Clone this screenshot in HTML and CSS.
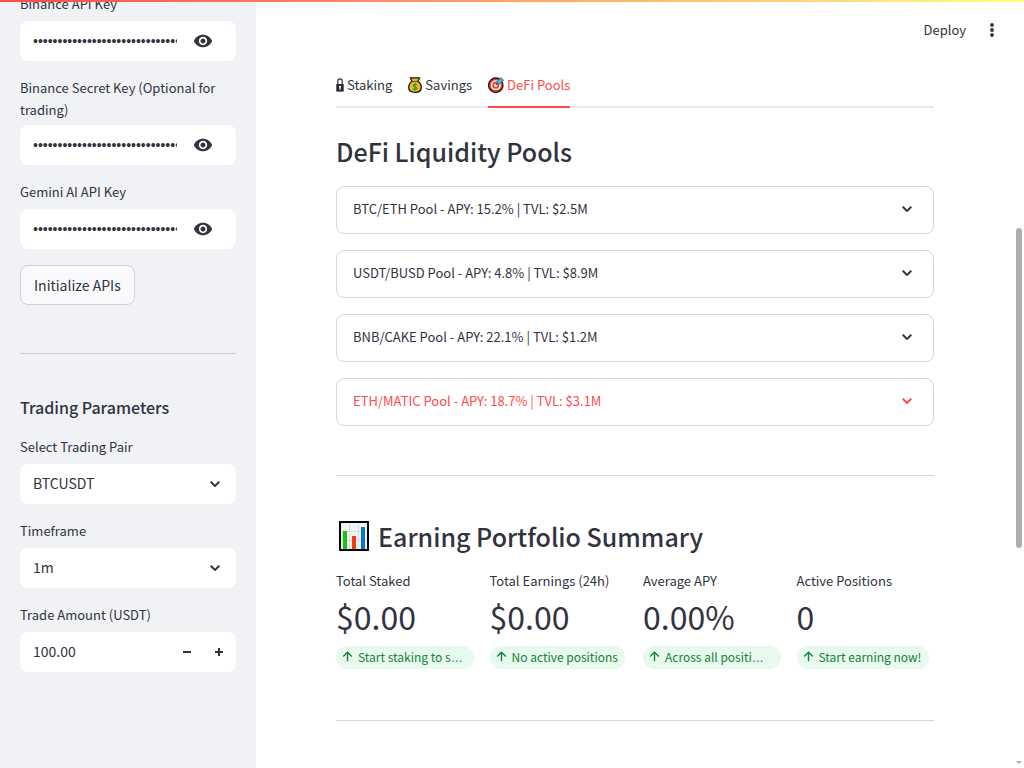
FILE: index.html
```html
<!DOCTYPE html>
<html lang="en">
<head>
<meta charset="utf-8">
<meta name="viewport" content="width=device-width, initial-scale=1">
<title>Earning Portfolio</title>
<link rel="stylesheet" href="styles.css">
</head>
<body>
<svg class="sprite" aria-hidden="true">
  <symbol id="eye" viewBox="0 0 24 24"><path fill="currentColor" d="M12 4.5C7 4.5 2.73 7.61 1 12c1.730 4.390 6 7.500 11 7.500s9.270-3.110 11-7.500c-1.730-4.390-6-7.500-11-7.500zM12 17c-2.760 0-5-2.240-5-5s2.240-5 5-5 5 2.240 5 5-2.240 5-5 5zm0-8c-1.660 0-3 1.340-3 3s1.340 3 3 3 3-1.340 3-3-1.340-3-3-3z"/></symbol>
  <symbol id="chevron" viewBox="0 0 10 6"><path fill="none" stroke="currentColor" stroke-width="1.900" d="M.7.800 5 5 9.300.800"/></symbol>
  <symbol id="arrow" viewBox="0 0 12 12"><path fill="none" stroke="currentColor" stroke-width="1.500" d="M6 11.200V1.500M1.300 6.100 6 1.400l4.700 4.700"/></symbol>
</svg>
<div class="rainbow"></div>
<div class="app">
  <aside class="sidebar">
    <form class="controls">
      <div class="field">
        <label for="api">Binance API Key</label>
        <div class="box"><input id="api" class="secret" type="password" value="0123456789012345678901234567890123456789"><button class="eye" type="button" aria-label="Show API key"><svg><use href="#eye"/></svg></button></div>
      </div>
      <div class="field">
        <label for="secret">Binance Secret Key (Optional for trading)</label>
        <div class="box"><input id="secret" class="secret" type="password" value="0123456789012345678901234567890123456789"><button class="eye" type="button" aria-label="Show secret key"><svg><use href="#eye"/></svg></button></div>
      </div>
      <div class="field">
        <label for="gemini">Gemini AI API Key</label>
        <div class="box"><input id="gemini" class="secret" type="password" value="0123456789012345678901234567890123456789"><button class="eye" type="button" aria-label="Show Gemini key"><svg><use href="#eye"/></svg></button></div>
      </div>
      <button class="init" type="button">Initialize APIs</button>
      <hr>
      <h3>Trading Parameters</h3>
      <div class="field">
        <label for="pair">Select Trading Pair</label>
        <div class="box"><select id="pair"><option>BTCUSDT</option></select><svg class="chevron"><use href="#chevron"/></svg></div>
      </div>
      <div class="field">
        <label for="time">Timeframe</label>
        <div class="box"><select id="time"><option>1m</option></select><svg class="chevron"><use href="#chevron"/></svg></div>
      </div>
      <div class="field">
        <label for="amount">Trade Amount (USDT)</label>
        <div class="box"><input id="amount" type="text" inputmode="decimal" value="100.00"><button class="step" type="button" aria-label="Decrease"><svg viewBox="0 0 8 8"><path d="M0 4h8"/></svg></button><button class="step" type="button" aria-label="Increase"><svg viewBox="0 0 8 8"><path d="M0 4h8M4 0v8"/></svg></button></div>
      </div>
    </form>
  </aside>
  <main class="main">
    <header class="toolbar">
      <button type="button">Deploy</button>
      <button type="button" aria-label="Menu"><svg class="kebab" viewBox="0 0 4 14"><circle cx="2" cy="2" r="1.900"/><circle cx="2" cy="7" r="1.900"/><circle cx="2" cy="12" r="1.900"/></svg></button>
    </header>
    <nav class="tabs" role="tablist">
      <button class="tab" type="button" role="tab"><svg class="lock" viewBox="0 0 8 14"><path fill="none" stroke="#31333f" stroke-width="1.200" d="M1.800 7V3a2.200 2.200 0 0 1 4.400 0v4"/><path fill="#262832" d="M.3 6h7.400v7.600H.3z"/><path fill="#fff" d="M4 7.700a1.100 1.100 0 0 1 .6 2v2H3.400v-2a1.100 1.100 0 0 1 .6-2z"/></svg>Staking</button>
      <button class="tab" type="button" role="tab"><svg class="bag" viewBox="0 0 14 16"><path fill="#f5b51c" stroke="#171717" stroke-width="1.300" d="M2.500.8h9L10 4.500c2.300 1.300 3.300 3.500 3.300 6 0 3.300-2 4.800-6.300 4.800S.7 13.800.7 10.500c0-2.500 1-4.700 3.300-6z"/><path stroke="#6b4a08" d="M4 4.500h6"/><path fill="none" stroke="#1f9b2d" stroke-width="1.200" d="M9 7.900C8.500 7 5.300 6.900 5.300 8.600c0 1.700 3.600.9 3.600 2.600 0 1.600-3.200 1.500-3.900.5M7 6v7.500"/></svg>Savings</button>
      <button class="tab active" type="button" role="tab" aria-selected="true"><svg class="target" viewBox="0 0 16 16"><circle cx="7.800" cy="8.200" r="7.200" fill="#ee4223" stroke="#171717" stroke-width="1.300"/><circle cx="7.800" cy="8.200" r="4.300" fill="none" stroke="#fff" stroke-width="1.400"/><circle cx="7.800" cy="8.200" r="1.700" fill="#fff"/><path stroke="#126b99" stroke-width="1.200" d="m7.800 8.200 4-4"/><path fill="#45bdf0" stroke="#174c66" stroke-width=".7" d="m9 4.500 4-4.100.8 1.800 1.800.8-4.100 4.100-2.200-.3z"/></svg>DeFi Pools</button>
    </nav>
    <h2>DeFi Liquidity Pools</h2>
    <div class="pools">
      <button class="pool" type="button">BTC/ETH Pool - APY: 15.2% | TVL: $2.5M<svg class="chevron"><use href="#chevron"/></svg></button>
      <button class="pool" type="button">USDT/BUSD Pool - APY: 4.8% | TVL: $8.9M<svg class="chevron"><use href="#chevron"/></svg></button>
      <button class="pool" type="button">BNB/CAKE Pool - APY: 22.1% | TVL: $1.2M<svg class="chevron"><use href="#chevron"/></svg></button>
      <button class="pool hot" type="button">ETH/MATIC Pool - APY: 18.7% | TVL: $3.1M<svg class="chevron"><use href="#chevron"/></svg></button>
    </div>
    <hr>
    <h2 class="summary"><svg class="chart" viewBox="0 0 30 30"><path fill="#f2f2f2" stroke="#000" stroke-width="2" d="M1 1h28v28H1z"/><path stroke="#ddd" d="M2 10.500h26M2 19.500h26M10.500 2v26M19.500 2v26"/><path fill="#16c60c" d="M4 10h4v18H4z"/><path fill="#f03a17" d="M13 15h4v13h-4z"/><path fill="#0078d7" d="M22 6h4v22h-4z"/></svg>Earning Portfolio Summary</h2>
    <section class="metrics">
      <div class="metric"><p class="name">Total Staked</p><p class="value">$0.00</p><p class="delta full"><svg><use href="#arrow"/></svg><span>Start staking to s<span class="more">…</span></span></p></div>
      <div class="metric"><p class="name">Total Earnings (24h)</p><p class="value">$0.00</p><p class="delta"><svg><use href="#arrow"/></svg><span>No active positions</span></p></div>
      <div class="metric"><p class="name">Average APY</p><p class="value">0.00%</p><p class="delta full"><svg><use href="#arrow"/></svg><span>Across all positi<span class="more">…</span></span></p></div>
      <div class="metric"><p class="name">Active Positions</p><p class="value">0</p><p class="delta"><svg><use href="#arrow"/></svg><span>Start earning now!</span></p></div>
    </section>
    <hr>
  </main>
</div>
<div class="scroll-thumb"></div>
<svg class="scroll-arrow" viewBox="0 0 6 3"><path fill="#acacb1" d="M0 0h6L3 3z"/></svg>
</body>
</html>
```
FILE: styles.css
```css
* { box-sizing: border-box; }
body {
  margin: 0;
  color: #31333f;
  background: #fff;
  font: 13px/22px "Source Sans Pro", "Noto Sans CJK KR", sans-serif;
}
h2, h3, p { margin: 0; }
button, input, select { font: inherit; color: inherit; }
button { padding: 0; border: 0; background: none; cursor: pointer; }
svg { display: block; flex: none; }
hr { width: 100%; height: 1px; margin: 48px 0; border: 0; background: #d6d6d9; }
.sprite { position: absolute; width: 0; height: 0; }
.rainbow {
  position: fixed; z-index: 2; top: 0; left: 0; right: 0; height: 2px;
  background: linear-gradient(90deg, #ff4b4b, #fffd80);
}
.app { display: flex; height: 100vh; overflow: hidden; }

.sidebar { flex: 0 0 256px; padding: 0 20px; background: #f0f2f6; overflow: hidden; }
.controls { display: flex; flex-direction: column; align-items: flex-start; margin-top: -7px; }
.controls hr { margin: 48px 0 41px; background: #cccdd1; }
.controls h3 { font-size: 16px; font-weight: 500; line-height: 24px; margin-bottom: 17px; }
.field { width: 100%; margin-bottom: 16px; }
.field label { display: block; min-height: 24px; margin-bottom: 4px; }
.box { display: flex; align-items: center; height: 40px; background: #fff; border-radius: 8px; overflow: hidden; }
.box input, .box select {
  flex: 1; min-width: 0; height: 40px; padding: 0 0 2px 13px;
  border: 0; outline: 0; background: none; appearance: none; font-size: 14px;
}
.box .secret { flex: none; width: 157px; padding-bottom: 0; font-family: "Liberation Sans", sans-serif; }
.eye { margin-left: 16px; }
.eye svg { width: 20px; height: 20px; }
.chevron { width: 10px; height: 6px; }
.box .chevron { margin-right: 16px; }
.step { display: grid; place-items: center; width: 32px; height: 40px; }
.step:last-child { margin-right: 1px; }
.step svg { width: 8px; height: 8px; }
.step path { stroke: currentColor; stroke-width: 2; }
.init {
  height: 40px; padding: 0 13px; font-size: 14px;
  border: 1px solid #d0d1d5; border-radius: 8px; background: #f9f9fb;
}

.main { flex: 1; min-width: 0; padding: 0 90px 0 80px; }
.toolbar { display: flex; justify-content: flex-end; align-items: center; gap: 24px; height: 60px; margin-right: -60px; }
.kebab { width: 4px; height: 14px; fill: currentColor; }
.tabs { display: flex; gap: 16px; margin-top: 4px; height: 44px; box-shadow: inset 0 -2px #e9e9eb; }
.tab { display: flex; align-items: center; gap: 3px; border-bottom: 2px solid transparent; }
.tab.active { color: #ff4b4b; border-color: #ff4b4b; }
.lock { width: 8px; height: 14px; }
.bag { width: 14px; height: 16px; }
.target { width: 16px; height: 16px; }
h2 { font-size: 25px; font-weight: 500; line-height: 34px; margin: 26px 0 18px; }
.pools { display: grid; gap: 16px; }
.pool {
  display: flex; align-items: center; justify-content: space-between; height: 48px;
  padding: 0 21px 2px 16px; border: 1px solid #d6d6d9; border-radius: 8px; text-align: left;
}
.pool.hot { color: #ff4b4b; }
.pools + hr { margin-top: 49px; }
.summary { display: flex; align-items: center; gap: 9px; margin: -5px 0 17px; padding-left: 3px; }
.chart { width: 30px; height: 30px; }
.metrics { display: grid; grid-template-columns: repeat(4, minmax(0, 1fr)); gap: 16px; }
.value { font-size: 32px; line-height: 48px; margin-bottom: 6px; }
.delta {
  display: flex; align-items: center; gap: 5px; width: fit-content; max-width: 100%; height: 23px;
  padding: 0 7px 2px 6px; border-radius: 12px; font-size: 12px; color: #158237; background: #e8f9ee;
}
.delta.full { width: 100%; }
.delta svg { width: 11px; height: 11px; }
.delta span { white-space: nowrap; }
.more { font-family: "Liberation Sans", sans-serif; line-height: 1; }
.metrics + hr { margin-top: 51px; }

.scroll-thumb { position: fixed; top: 228px; right: 2px; width: 6px; height: 320px; border-radius: 3px; background: #acacb1; }
.scroll-arrow { position: fixed; right: 2px; bottom: 4px; width: 6px; height: 3px; }
```
